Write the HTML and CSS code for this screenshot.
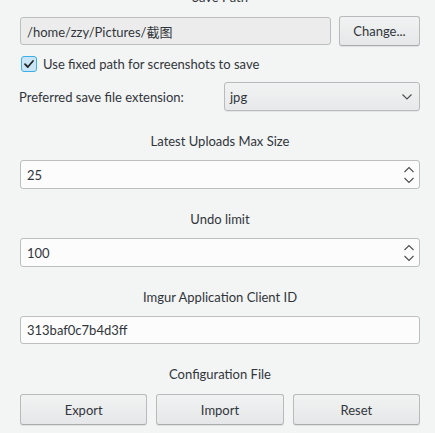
FILE: index.html
```html
<!DOCTYPE html>
<html>
<head>
<meta charset="utf-8">
<link rel="stylesheet" href="styles.css">
</head>
<body>
<div class="page">
  <div class="title first">Save Path</div>
  <div class="path-row">
    <div class="field readonly">/home/zzy/Pictures/截图</div>
    <button class="btn change">Change...</button>
  </div>
  <div class="check-row">
    <span class="checkbox"><svg width="16" height="16" viewBox="0 0 16 16"><path d="M4 8.2 L6.8 11 L12 5" fill="none" stroke="#232629" stroke-width="1.8" stroke-linecap="round" stroke-linejoin="round"/></svg></span>
    <span class="check-label">Use fixed path for screenshots to save</span>
  </div>
  <div class="ext-row">
    <span class="ext-label">Preferred save file extension:</span>
    <div class="combo">
      <span>jpg</span>
      <svg class="chev" width="12" height="8" viewBox="0 0 12 8"><path d="M1.5 1.5 L6 6 L10.5 1.5" fill="none" stroke="#4d4d4d" stroke-width="1.1"/></svg>
    </div>
  </div>
  <div class="title">Latest Uploads Max Size</div>
  <div class="field spin">
    <span>25</span>
    <svg class="arrows" width="12" height="20" viewBox="0 0 12 20"><path d="M1.5 7 L6 2.5 L10.5 7" fill="none" stroke="#4d4d4d" stroke-width="1.1"/><path d="M1.5 13 L6 17.5 L10.5 13" fill="none" stroke="#4d4d4d" stroke-width="1.1"/></svg>
  </div>
  <div class="title">Undo limit</div>
  <div class="field spin">
    <span>100</span>
    <svg class="arrows" width="12" height="20" viewBox="0 0 12 20"><path d="M1.5 7 L6 2.5 L10.5 7" fill="none" stroke="#4d4d4d" stroke-width="1.1"/><path d="M1.5 13 L6 17.5 L10.5 13" fill="none" stroke="#4d4d4d" stroke-width="1.1"/></svg>
  </div>
  <div class="title">Imgur Application Client ID</div>
  <div class="field text">313baf0c7b4d3ff</div>
  <div class="title">Configuration File</div>
  <div class="btn-row">
    <button class="btn">Export</button>
    <button class="btn">Import</button>
    <button class="btn">Reset</button>
  </div>
</div>
</body>
</html>
```

FILE: styles.css
```css
html, body {
  margin: 0;
  padding: 0;
  background: #f3f4f4;
  overflow: hidden;
}
body {
  width: 435px;
  height: 433px;
  font-family: Lato, "Noto Sans", "Noto Sans CJK SC", sans-serif;
  font-size: 13px;
  color: #31363b;
}
.page {
  display: flex;
  flex-direction: column;
  padding: 0 15px 0 20px;
}
.title {
  height: 18px;
  line-height: 18px;
  text-align: center;
  margin-top: 21px;
  margin-bottom: 10px;
}
.title.first {
  margin-top: -12px;
  margin-bottom: 10px;
}
.path-row {
  display: flex;
  align-items: center;
  gap: 8px;
  height: 30px;
}
.field {
  box-sizing: border-box;
  border: 1px solid #bcbebf;
  border-radius: 3px;
  background: #fcfcfc;
  display: flex;
  align-items: center;
  padding: 0 6px;
}
.readonly {
  flex: 1;
  height: 28px;
  background: #ececec;
  font-family: Lato, "Noto Sans CJK SC", sans-serif;
}
.btn {
  box-sizing: border-box;
  font: inherit;
  color: #31363b;
  border: 1px solid #b8babb;
  border-bottom-color: #a9abad;
  border-radius: 3px;
  background: linear-gradient(#f1f2f2, #e6e7e8);
  box-shadow: 0 1px 0 rgba(0,0,0,0.08);
  padding: 0;
}
.change {
  width: 81px;
  height: 30px;
}
.check-row {
  display: flex;
  align-items: center;
  margin-top: 10px;
  height: 16px;
  padding-left: 1px;
}
.checkbox {
  box-sizing: border-box;
  width: 16px;
  height: 16px;
  border: 1px solid #3daee9;
  border-radius: 3px;
  background: #c9e5f6;
  display: flex;
}
.checkbox svg {
  margin: -1px;
}
.check-label {
  margin-left: 6px;
}
.ext-row {
  display: flex;
  align-items: center;
  margin-top: 10px;
  height: 29px;
}
.ext-label {
  width: 205px;
  margin-left: -1px;
}
.combo {
  box-sizing: border-box;
  flex: 1;
  height: 29px;
  border: 1px solid #b8babb;
  border-radius: 3px;
  background: linear-gradient(#f1f2f2, #e8e9ea);
  display: flex;
  align-items: center;
  justify-content: space-between;
  padding: 0 6px 0 5px;
  box-shadow: 0 1px 0 rgba(0,0,0,0.06);
}
.spin {
  height: 29px;
  justify-content: space-between;
  padding-right: 4px;
}
.text {
  height: 28px;
}
.btn-row {
  display: grid;
  grid-template-columns: 1fr 1fr 1fr;
  gap: 9px;
  margin-top: 1px;
}
.btn-row .btn {
  height: 31px;
}
```
